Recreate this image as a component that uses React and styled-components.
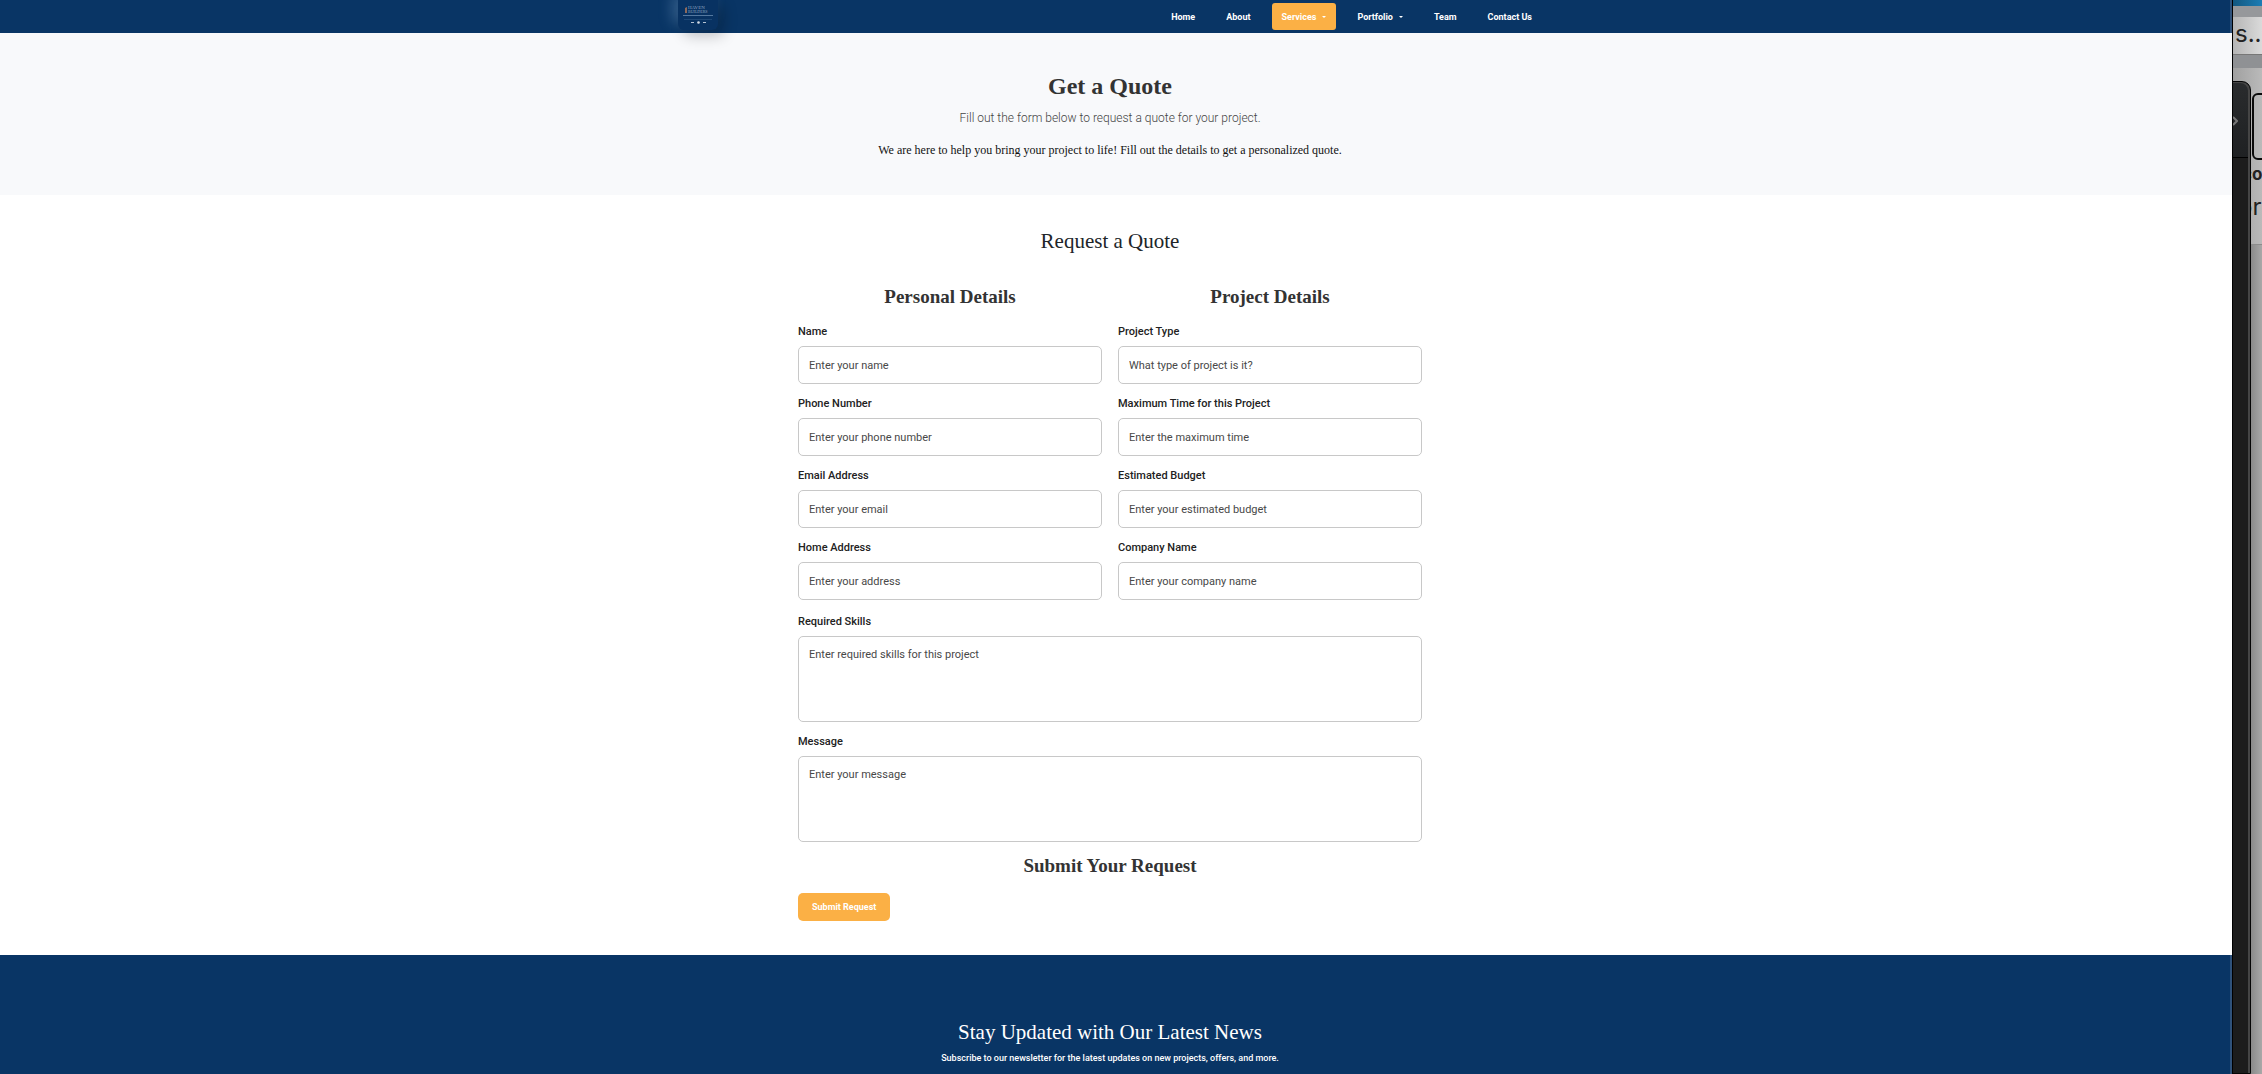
import React from "react";
import styled, { createGlobalStyle } from "styled-components";

const serif = `"Liberation Serif", "Times New Roman", serif`;
const sans = `Roboto, "Liberation Sans", sans-serif`;
const navy = "#093565";
const amber = "#fbb045";

const GlobalStyle = createGlobalStyle`
  *, *::before, *::after { box-sizing: border-box; }
  body { margin: 0; background: #fff; color: #212529; font-family: ${serif}; }
  h1, h2, h3, p { margin: 0; }
`;

const Screen = styled.div`
  display: flex;
  min-height: 100vh;
`;

const Page = styled.div`
  flex: 1;
  min-width: 0;
  display: flex;
  flex-direction: column;
  background: #fff;
`;

const Header = styled.header`
  background: ${navy};
  height: 33px;
  padding-right: 10px;
  border-right: 2px solid #2f527b;
`;

const HeaderInner = styled.div`
  max-width: 864px;
  height: 100%;
  margin: 0 auto;
  display: flex;
  align-items: center;
  justify-content: space-between;
`;

const Brand = styled.a`
  position: relative;
  align-self: flex-start;
  display: block;
  width: 40px;
  height: 30px;
  border-radius: 0 0 6px 6px;
  background: #083262;
  box-shadow: 6px 6px 14px rgba(0, 0, 0, 0.22), -6px -6px 14px rgba(150, 190, 225, 0.3);

  svg { display: block; }
`;

const Nav = styled.nav`
  display: flex;
  gap: 11px;
`;

const NavLink = styled.a`
  display: flex;
  align-items: center;
  gap: 6px;
  height: 27px;
  padding: 0 10px;
  border-radius: 3px;
  background: ${(p) => (p.$active ? amber : "transparent")};
  color: #fff;
  font: 700 9px/16px ${sans};
  text-decoration: none;
`;

const Caret = styled.span`
  border: 2px solid transparent;
  border-top-color: #fff;
  border-bottom: 0;
`;

const Hero = styled.section`
  display: flex;
  flex-direction: column;
  align-items: center;
  padding: 39px 12px 36px 0;
  background: #f8f9fb;
  text-align: center;
`;

const HeroTitle = styled.h1`
  color: #333;
  font: 700 24px/28px ${serif};
  margin-bottom: 10px;
`;

const HeroLead = styled.p`
  color: #444;
  font: 300 12px/16px ${sans};
  margin-bottom: 15px;
`;

const HeroText = styled.p`
  color: #111;
  font: 400 12px/18px ${serif};
`;

const QuoteSection = styled.main`
  padding: 33px 12px 34px 0;
`;

const QuoteForm = styled.form`
  max-width: 624px;
  margin: 0 auto;
`;

const SectionTitle = styled.h2`
  font: 400 21px/26px ${serif};
  text-align: center;
  color: ${(p) => (p.$light ? "#fff" : "#212529")};
  margin-bottom: ${(p) => (p.$light ? "5px" : "31px")};
`;

const Columns = styled.div`
  display: grid;
  grid-template-columns: 1fr 1fr;
  gap: 16px;
  margin-bottom: 2px;
`;

const GroupTitle = styled.h3`
  color: #333;
  font: 700 19px/24px ${serif};
  text-align: center;
  margin-bottom: 15px;
`;

const Field = styled.div`
  display: flex;
  flex-direction: column;
  gap: 6px;
  margin-bottom: 12px;
`;

const Label = styled.label`
  color: #222;
  font: 500 11px/16px ${sans};
`;

const controlStyle = `
  width: 100%;
  margin: 0;
  border: 1px solid #c8c8c8;
  border-radius: 5px;
  background: #fff;
  color: #333;
  font: 400 11px/16px ${sans};
  outline: none;
  &::placeholder { color: #484848; opacity: 1; }
`;

const Input = styled.input`
  ${controlStyle}
  height: 38px;
  padding: 0 10px;
`;

const TextArea = styled.textarea`
  ${controlStyle}
  display: block;
  height: 86px;
  padding: 10px;
  resize: none;
`;

const SubmitGroup = styled.div`
  button { display: block; }
`;

const SubmitButton = styled.button`
  height: 28px;
  padding: 0 14px;
  border: 0;
  border-radius: 5px;
  background: ${amber};
  color: #fff;
  font: 700 9px/16px ${sans};
  cursor: pointer;
`;

const Newsletter = styled.footer`
  flex: 1;
  padding: 64px 10px 7px 0;
  border-right: 2px solid #2f527b;
  background: ${navy};
  color: #fff;
  text-align: center;
`;

const NewsletterText = styled.p`
  font: 500 9px/16px ${sans};
`;

/* Sliver of the desktop left uncovered at the right of the browser window */
const Desktop = styled.aside`
  position: relative;
  width: 30px;
  flex: none;
  overflow: hidden;
  border-left: 1px solid #000;
  background: linear-gradient(90deg, #8a8a8a 18px, #ababab 30px);
`;

const MenuStrip = styled.div`
  height: 6px;
  background: linear-gradient(90deg, #12577f, #1b7db5);
`;

const TabStrip = styled.div`
  height: 11px;
  background: #96989b;
`;

const AddressStrip = styled.div`
  height: 38px;
  background: linear-gradient(90deg, #b5b5b5, #dadada);
  border-bottom: 1px solid #777;
`;

const ToolStrip = styled.div`
  height: 13px;
  background: #8f9194;
`;

const BackPage = styled.div`
  height: 177px;
  background: linear-gradient(90deg, #a0a0a0, #bababa);
  border-bottom: 1px solid #8c8c8c;
`;

const BackText = styled.span`
  position: absolute;
  left: ${(p) => p.$x}px;
  top: ${(p) => p.$y}px;
  color: #222;
  font: ${(p) => p.$weight || 400} ${(p) => p.$size}px/28px Inter, sans-serif;
  white-space: nowrap;
`;

const BackBox = styled.div`
  position: absolute;
  left: 19px;
  top: 93px;
  width: 40px;
  height: 67px;
  border: 2px solid #0a0a0a;
  border-radius: 6px;
`;

const DarkWindow = styled.div`
  position: absolute;
  left: -20px;
  top: 81px;
  bottom: 0;
  width: 38px;
  border: 1px solid #050505;
  border-radius: 0 9px 0 0;
  box-shadow: inset -2px 1px 0 #454545;
  background: linear-gradient(#292b2d, #1f2123 75px, #000 75px, #000 76px, #1c1c1c 76px);

  svg { position: absolute; left: 18px; top: 33px; }
`;

const navItems = [
  { label: "Home" },
  { label: "About" },
  { label: "Services", menu: true, active: true },
  { label: "Portfolio", menu: true },
  { label: "Team" },
  { label: "Contact Us" },
];

const groups = [
  {
    title: "Personal Details",
    fields: [
      { id: "name", label: "Name", hint: "Enter your name" },
      { id: "phone", label: "Phone Number", hint: "Enter your phone number", type: "tel" },
      { id: "email", label: "Email Address", hint: "Enter your email", type: "email" },
      { id: "address", label: "Home Address", hint: "Enter your address" },
    ],
  },
  {
    title: "Project Details",
    fields: [
      { id: "type", label: "Project Type", hint: "What type of project is it?" },
      { id: "time", label: "Maximum Time for this Project", hint: "Enter the maximum time" },
      { id: "budget", label: "Estimated Budget", hint: "Enter your estimated budget" },
      { id: "company", label: "Company Name", hint: "Enter your company name" },
    ],
  },
];

const longFields = [
  { id: "skills", label: "Required Skills", hint: "Enter required skills for this project" },
  { id: "message", label: "Message", hint: "Enter your message" },
];

function Logo() {
  return (
    <svg width="40" height="30" viewBox="0 0 40 30" aria-hidden="true">
      <path d="M7 13V8l2-1v6z" fill="#8d6a5c" />
      <text x="10" y="9" fill="#8fa6c0" fontSize="5" fontFamily="Liberation Serif">HAVEN</text>
      <text x="10" y="13" fill="#8fa6c0" fontSize="4" fontFamily="Liberation Serif">BUILDERS</text>
      <path d="M5 15.5h30" stroke="#54789f" />
      <path d="M6 19.5h28" stroke="#1d4876" />
      <path d="M13 22.5h3M25 22.5h3" stroke="#b5c3d3" />
      <circle cx="20.500" cy="22.500" r="1.300" fill="#d5dde6" />
    </svg>
  );
}

export default function App() {
  return (
    <>
      <GlobalStyle />
      <Screen>
        <Page>
          <Header>
            <HeaderInner>
              <Brand href="#" aria-label="Haven Builders"><Logo /></Brand>
              <Nav>
                {navItems.map((item) => (
                  <NavLink key={item.label} href="#" $active={item.active}>
                    {item.label}
                    {item.menu && <Caret />}
                  </NavLink>
                ))}
              </Nav>
            </HeaderInner>
          </Header>

          <Hero>
            <HeroTitle>Get a Quote</HeroTitle>
            <HeroLead>Fill out the form below to request a quote for your project.</HeroLead>
            <HeroText>
              We are here to help you bring your project to life! Fill out the details to get a personalized quote.
            </HeroText>
          </Hero>

          <QuoteSection>
            <SectionTitle>Request a Quote</SectionTitle>
            <QuoteForm onSubmit={(e) => e.preventDefault()}>
              <Columns>
                {groups.map((group) => (
                  <div key={group.title}>
                    <GroupTitle>{group.title}</GroupTitle>
                    {group.fields.map((f) => (
                      <Field key={f.id}>
                        <Label htmlFor={f.id}>{f.label}</Label>
                        <Input id={f.id} type={f.type || "text"} placeholder={f.hint} />
                      </Field>
                    ))}
                  </div>
                ))}
              </Columns>
              {longFields.map((f) => (
                <Field key={f.id}>
                  <Label htmlFor={f.id}>{f.label}</Label>
                  <TextArea id={f.id} placeholder={f.hint} />
                </Field>
              ))}
              <SubmitGroup>
                <GroupTitle>Submit Your Request</GroupTitle>
                <SubmitButton type="submit">Submit Request</SubmitButton>
              </SubmitGroup>
            </QuoteForm>
          </QuoteSection>

          <Newsletter>
            <SectionTitle $light>Stay Updated with Our Latest News</SectionTitle>
            <NewsletterText>
              Subscribe to our newsletter for the latest updates on new projects, offers, and more.
            </NewsletterText>
          </Newsletter>
        </Page>

        <Desktop>
          <MenuStrip />
          <TabStrip />
          <AddressStrip />
          <ToolStrip />
          <BackPage />
          <BackText $x={2} $y={20} $size={24}>s..</BackText>
          <BackBox />
          <BackText $x={9} $y={160} $size={17} $weight={700}>co</BackText>
          <BackText $x={5} $y={193} $size={24}>or</BackText>
          <DarkWindow>
            <svg width="6" height="12" viewBox="0 0 6 12" aria-hidden="true">
              <path d="M1 2l4 4-4 4" fill="none" stroke="#777" strokeWidth="2" />
            </svg>
          </DarkWindow>
        </Desktop>
      </Screen>
    </>
  );
}
